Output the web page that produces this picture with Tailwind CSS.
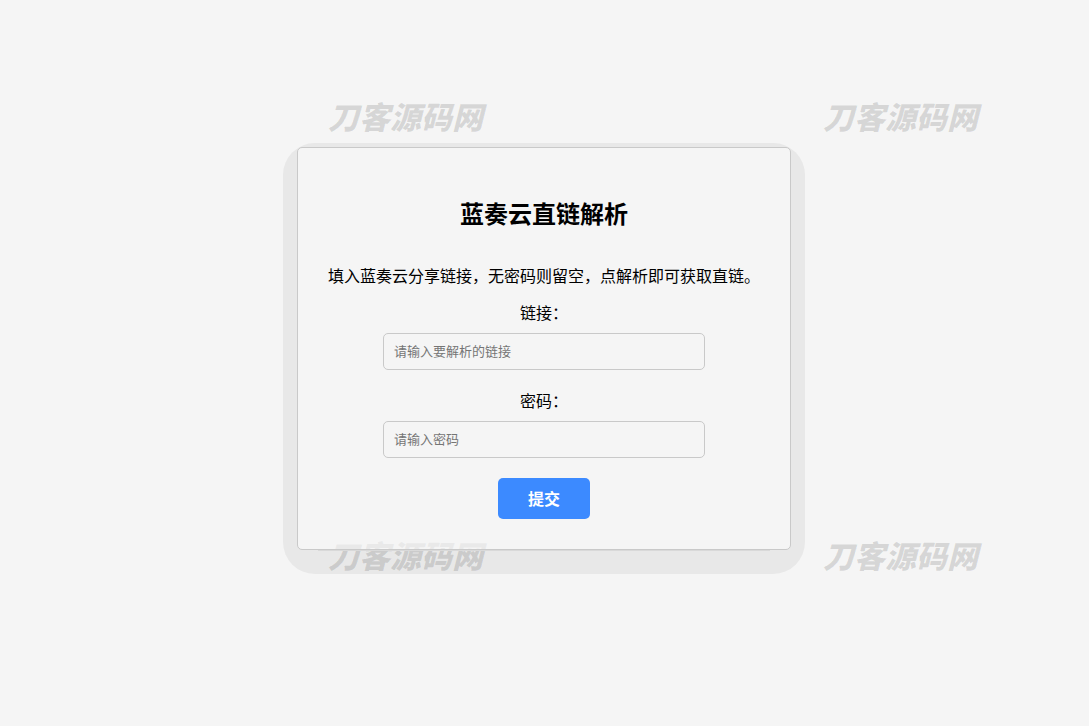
<!DOCTYPE html>
<html lang="zh">
<head>
<meta charset="UTF-8" />
<meta name="viewport" content="width=device-width, initial-scale=1.0"/>
<title>蓝奏云直链解析</title>
<script src="https://cdn.jsdelivr.net/npm/@tailwindcss/browser@4"></script>
</head>
<body class="relative min-h-screen flex items-center justify-center pb-[9px] pr-px bg-[#f5f5f5] text-black text-base font-['Noto_Sans_CJK_SC',sans-serif]">
  <div class="rounded-[32px] bg-[#e8e8e8] pt-1 px-[14px] pb-6">
    <div class="relative z-20 rounded-[5px] border border-[#c9c9c9] bg-[#fefefe]/60 p-[30px] text-center shadow-[0_22px_0_-21px_#d9d9d9]">
      <h2 class="mt-[19px] text-2xl font-bold">蓝奏云直链解析</h2>
      <p class="mt-[34px]">填入蓝奏云分享链接，无密码则留空，点解析即可获取直链。</p>
      <form class="mt-[13px] flex flex-col items-center" onsubmit="return false">
        <label for="url">链接：</label>
        <input id="url" type="text" placeholder="请输入要解析的链接"
          class="mt-[9px] mb-[18px] h-[37px] w-[322px] max-w-full rounded-[5px] border border-[#c9c9c9] px-[10px] pb-[2px] text-[13px] placeholder:text-[#757575]">
        <label for="pwd">密码：</label>
        <input id="pwd" type="text" placeholder="请输入密码"
          class="mt-[9px] mb-5 h-[37px] w-[322px] max-w-full rounded-[5px] border border-[#c9c9c9] px-[10px] pb-[2px] text-[13px] placeholder:text-[#757575]">
        <button type="submit" class="h-[41px] rounded-[5px] bg-[#3c8aff] px-[30px] pb-[2px] font-bold text-white">提交</button>
      </form>
    </div>
  </div>

  <!-- 水印 -->
  <div aria-hidden="true" class="pointer-events-none absolute inset-0 z-10 overflow-hidden text-[31px] leading-8 font-black italic whitespace-nowrap text-black/13">
    <span class="absolute left-[328px] top-[100px]">刀客源码网</span>
    <span class="absolute left-[823px] top-[100px]">刀客源码网</span>
    <span class="absolute left-[328px] top-[539px]">刀客源码网</span>
    <span class="absolute left-[823px] top-[539px]">刀客源码网</span>
  </div>
</body>
</html>
